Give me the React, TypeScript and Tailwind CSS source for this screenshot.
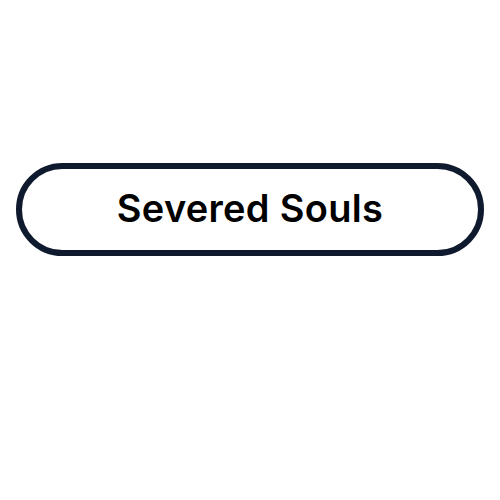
export default function App() {
  return (
    <div className="w-[500px] h-[500px] bg-white flex flex-col px-4 pt-[163px]">
      <button className="h-[93px] w-full rounded-full border-[6px] border-[#0f1a2e] bg-white flex items-center justify-center pb-[3px]">
        <span className="font-['Inter',sans-serif] font-semibold text-[38px] text-black tracking-[0.3px]">
          Severed Souls
        </span>
      </button>
    </div>
  )
}
